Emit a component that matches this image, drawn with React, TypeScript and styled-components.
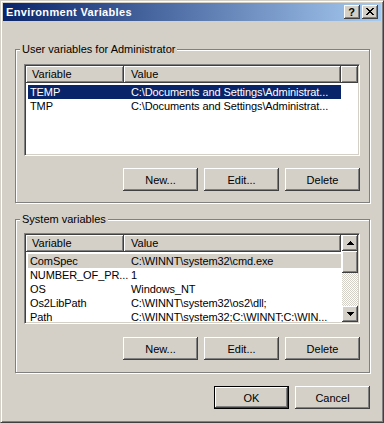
import React from "react";
import styled, { createGlobalStyle, css } from "styled-components";

const GlobalStyle = createGlobalStyle`
    html, body {
        margin: 0;
        padding: 0;
        background: #d4d0c8;
    }
    * {
        box-sizing: border-box;
    }
`;

const FONT = `Tahoma, "Liberation Sans", "DejaVu Sans", sans-serif`;

// 3Dの出っ張り (ボタン・ヘッダー共通)
const raised = css`
    background: #d4d0c8;
    box-shadow: inset -1px -1px 0 #404040, inset 1px 1px 0 #ffffff, inset -2px -2px 0 #808080;
`;

const Window = styled.div`
    width: 384px;
    height: 423px;
    padding: 2px;
    border: 1px solid;
    border-color: #d4d0c8 #404040 #404040 #d4d0c8;
    box-shadow: inset 1px 1px 0 #ffffff, inset -1px -1px 0 #808080;
    background: #d4d0c8;
    font-family: ${FONT};
    font-size: 11px;
    color: #000;
    display: flex;
    flex-direction: column;
`;

const TitleBar = styled.div`
    height: 18px;
    display: flex;
    align-items: center;
    padding: 0 3px 0 3px;
    background: linear-gradient(to right, #0a246a, #a6caf0);
`;

const Title = styled.div`
    flex: 1;
    color: #fff;
    font-weight: bold;
    font-size: 11px;
    letter-spacing: 0.35px;
    line-height: 18px;
    white-space: nowrap;
`;

const CaptionButtons = styled.div`
    display: flex;
    gap: 2px;
`;

const CaptionButton = styled.div`
    ${raised};
    width: 16px;
    height: 14px;
    display: flex;
    align-items: center;
    justify-content: center;
    font-weight: bold;
    font-size: 11px;
    line-height: 14px;
    padding: 0 1px 1px 0;
`;

const Body = styled.div`
    padding: 28px 11px 0 12px;
    display: flex;
    flex-direction: column;
`;

const Group = styled.div<{ $top: number; $gap?: number }>`
    position: relative;
    height: 154px;
    margin-top: ${(p) => p.$gap ?? 0}px;
    padding: ${(p) => p.$top}px 9px 0 8px;
    border: 1px solid #808080;
    box-shadow: 1px 1px 0 #ffffff, inset 1px 1px 0 #ffffff;
    display: flex;
    flex-direction: column;
`;

const GroupLabel = styled.div`
    position: absolute;
    top: -7px;
    left: 4px;
    padding: 0 2px;
    line-height: 13px;
    background: #d4d0c8;
    white-space: nowrap;
`;

const ListView = styled.div<{ $h: number }>`
    height: ${(p) => p.$h}px;
    border: 1px solid;
    border-color: #808080 #ffffff #ffffff #808080;
    box-shadow: inset 1px 1px 0 #404040, inset -1px -1px 0 #d4d0c8;
    background: #fff;
    padding: 1px;
    display: flex;
    overflow: hidden;
`;

const ListMain = styled.div`
    flex: 1;
    min-width: 0;
    display: flex;
    flex-direction: column;
    overflow: hidden;
`;

const Header = styled.div`
    display: flex;
    height: 17px;
    flex-shrink: 0;
`;

const HeaderCell = styled.div<{ $w?: number; $pad?: number }>`
    ${raised};
    ${(p) => (p.$w ? `width: ${p.$w}px; flex-shrink: 0;` : "flex: 1;")}
    padding-left: ${(p) => p.$pad ?? 0}px;
    line-height: 16px;
    white-space: nowrap;
`;

const Rows = styled.div`
    padding: 2px 0 0 2px;
`;

const Row = styled.div<{ $state?: "active" | "inactive" }>`
    display: flex;
    width: 313px;
    height: 14px;
    line-height: 14px;
    white-space: nowrap;
    ${(p) =>
        p.$state === "active"
            ? "background: #0a246a; color: #fff;"
            : p.$state === "inactive"
            ? "background: #d4d0c8;"
            : ""}
`;

const Cell = styled.div<{ $w: number; $pad: number }>`
    width: ${(p) => p.$w}px;
    padding-left: ${(p) => p.$pad}px;
    flex-shrink: 0;
    letter-spacing: -0.1px;
`;

const ScrollBar = styled.div`
    width: 16px;
    flex-shrink: 0;
    display: flex;
    flex-direction: column;
`;

const ScrollButton = styled.div`
    ${raised};
    height: 16px;
    flex-shrink: 0;
    display: flex;
    align-items: center;
    justify-content: center;
`;

const Thumb = styled.div`
    ${raised};
    height: 22px;
    flex-shrink: 0;
`;

const Track = styled.div`
    flex: 1;
    background: repeating-conic-gradient(#d4d0c8 0% 25%, #ffffff 0% 50%) 0 0 / 2px 2px;
`;

const ButtonRow = styled.div<{ $gap: number }>`
    display: flex;
    justify-content: flex-end;
    gap: 6px;
    margin-top: ${(p) => p.$gap}px;
`;

const Button = styled.div<{ $default?: boolean }>`
    width: 75px;
    height: 23px;
    display: flex;
    align-items: center;
    justify-content: center;
    background: #d4d0c8;
    box-shadow: inset -1px -1px 0 #404040, inset 1px 1px 0 #ffffff, inset -2px -2px 0 #808080;
    ${(p) => p.$default && "border: 1px solid #000;"}
`;

const Arrow: React.FC<{ down?: boolean }> = ({ down }) => (
    <svg width="7" height="4" viewBox="0 0 7 4" shapeRendering="crispEdges" style={{ transform: down ? "rotate(180deg)" : undefined }}>
        <rect x="3" y="0" width="1" height="1" fill="#000" />
        <rect x="2" y="1" width="3" height="1" fill="#000" />
        <rect x="1" y="2" width="5" height="1" fill="#000" />
        <rect x="0" y="3" width="7" height="1" fill="#000" />
    </svg>
);

const CloseGlyph: React.FC = () => (
    <svg width="8" height="7" viewBox="0 0 8 7" shapeRendering="crispEdges">
        <path d="M0 0h2v1h-2zM6 0h2v1h-2zM1 1h2v1h-2zM5 1h2v1h-2zM2 2h4v1h-4zM3 3h2v1h-2zM2 4h4v1h-4zM1 5h2v1h-2zM5 5h2v1h-2zM0 6h2v1h-2zM6 6h2v1h-2z" fill="#000" />
    </svg>
);

type Variable = { name: string; value: string; state?: "active" | "inactive" };

const userVars: Variable[] = [
    { name: "TEMP", value: "C:\\Documents and Settings\\Administrat...", state: "active" },
    { name: "TMP", value: "C:\\Documents and Settings\\Administrat..." },
];

const systemVars: Variable[] = [
    { name: "ComSpec", value: "C:\\WINNT\\system32\\cmd.exe", state: "inactive" },
    { name: "NUMBER_OF_PR...", value: "1" },
    { name: "OS", value: "Windows_NT" },
    { name: "Os2LibPath", value: "C:\\WINNT\\system32\\os2\\dll;" },
    { name: "Path", value: "C:\\WINNT\\system32;C:\\WINNT;C:\\WIN..." },
];

const VariableList: React.FC<{ vars: Variable[]; height: number; scroll?: boolean }> = ({ vars, height, scroll }) => (
    <ListView $h={height}>
        <ListMain>
            <Header>
                <HeaderCell $w={98} $pad={6}>Variable</HeaderCell>
                <HeaderCell $w={217} $pad={7}>Value</HeaderCell>
                {!scroll && <HeaderCell />}
            </Header>
            <Rows>
                {vars.map((v) => (
                    <Row key={v.name} $state={v.state}>
                        <Cell $w={96} $pad={2}>{v.name}</Cell>
                        <Cell $w={217} $pad={7}>{v.value}</Cell>
                    </Row>
                ))}
            </Rows>
        </ListMain>
        {scroll && (
            <ScrollBar>
                <ScrollButton><Arrow /></ScrollButton>
                <Thumb />
                <Track />
                <ScrollButton><Arrow down /></ScrollButton>
            </ScrollBar>
        )}
    </ListView>
);

const App: React.FC = () => {
    return (
        <>
            <GlobalStyle />
            <Window>
                <TitleBar>
                    <Title>Environment Variables</Title>
                    <CaptionButtons>
                        <CaptionButton>?</CaptionButton>
                        <CaptionButton><CloseGlyph /></CaptionButton>
                    </CaptionButtons>
                </TitleBar>
                <Body>
                    <Group $top={14}>
                        <GroupLabel>User variables for Administrator</GroupLabel>
                        <VariableList vars={userVars} height={92} />
                        <ButtonRow $gap={12}>
                            <Button>New...</Button>
                            <Button>Edit...</Button>
                            <Button>Delete</Button>
                        </ButtonRow>
                    </Group>
                    <Group $top={13} $gap={16}>
                        <GroupLabel>System variables</GroupLabel>
                        <VariableList vars={systemVars} height={91} scroll />
                        <ButtonRow $gap={13}>
                            <Button>New...</Button>
                            <Button>Edit...</Button>
                            <Button>Delete</Button>
                        </ButtonRow>
                    </Group>
                    <ButtonRow $gap={13}>
                        <Button $default>OK</Button>
                        <Button>Cancel</Button>
                    </ButtonRow>
                </Body>
            </Window>
        </>
    );
};

export default App;
